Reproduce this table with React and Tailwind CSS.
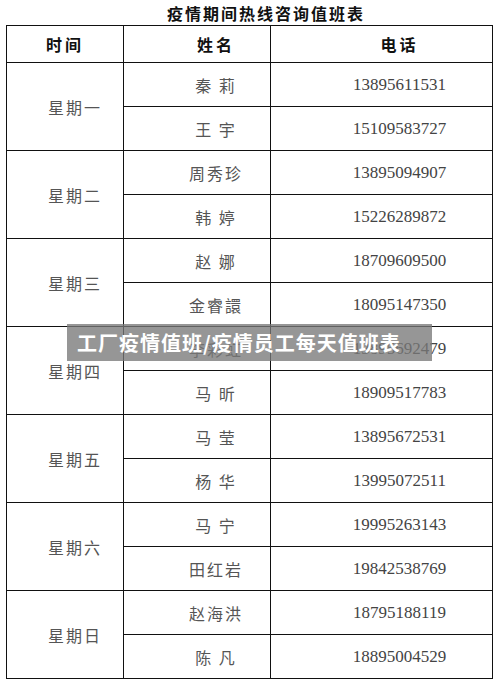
import React from "react";

const days = [
  { day: "星期一", rows: [["秦 莉", "13895611531"], ["王 宇", "15109583727"]] },
  { day: "星期二", rows: [["周秀珍", "13895094907"], ["韩 婷", "15226289872"]] },
  { day: "星期三", rows: [["赵 娜", "18709609500"], ["金睿譞", "18095147350"]] },
  { day: "星期四", rows: [["李彩虹", "13895692479"], ["马 昕", "18909517783"]] },
  { day: "星期五", rows: [["马 莹", "13895672531"], ["杨 华", "13995072511"]] },
  { day: "星期六", rows: [["马 宁", "19995263143"], ["田红岩", "19842538769"]] },
  { day: "星期日", rows: [["赵海洪", "18795188119"], ["陈 凡", "18895004529"]] }
];

const cjk = { fontFamily: '"Noto Sans CJK SC", sans-serif' };
const num = { fontFamily: '"Liberation Serif", serif' };

const App = () => {
  return (
    <div className="w-[500px] h-[685px] bg-white relative overflow-hidden">
      <div
        className="h-[25px] flex items-center justify-center pl-[32px] text-[16px] font-bold text-[#111] tracking-[2px]"
        style={cjk}
      >
        疫情期间热线咨询值班表
      </div>
      <table className="ml-[6px] w-[486px] border-collapse border-[1.5px] border-[#111] table-fixed">
        <colgroup>
          <col className="w-[117px]" />
          <col className="w-[147px]" />
          <col className="w-[222px]" />
        </colgroup>
        <thead>
          <tr className="h-[37px]">
            <th className="border border-[#111] pl-0 text-[16px] font-bold text-[#111] tracking-[3px]" style={cjk}>
              时间
            </th>
            <th className="border border-[#111] pl-[38px] text-[16px] font-bold text-[#111] tracking-[3px]" style={cjk}>
              姓名
            </th>
            <th className="border border-[#111] pl-[36px] text-[16px] font-bold text-[#111] tracking-[3px]" style={cjk}>
              电话
            </th>
          </tr>
        </thead>
        <tbody>
          {days.map((d) =>
            d.rows.map((r, i) => (
              <tr key={d.day + i} className="h-[44px]">
                {i === 0 && (
                  <td
                    rowSpan={2}
                    className="border border-[#111] pl-[20px] text-center text-[16px] text-[#555] tracking-[2px]"
                    style={cjk}
                  >
                    {d.day}
                  </td>
                )}
                <td
                  className="border border-[#111] pl-[38px] text-center text-[16px] text-[#555] tracking-[2px] whitespace-pre"
                  style={cjk}
                >
                  {r[0]}
                </td>
                <td className="border border-[#111] pl-[36px] text-center text-[17px] text-[#444]" style={num}>
                  {r[1]}
                </td>
              </tr>
            ))
          )}
        </tbody>
      </table>
      <div className="absolute left-[67px] top-[324px] w-[365px] h-[37px] bg-[rgba(120,120,120,0.78)] flex items-center pl-[10px]">
        <span className="text-white text-[20px] font-bold tracking-[1px]" style={cjk}>
          工厂疫情值班/疫情员工每天值班表
        </span>
      </div>
    </div>
  );
};

export default App;
